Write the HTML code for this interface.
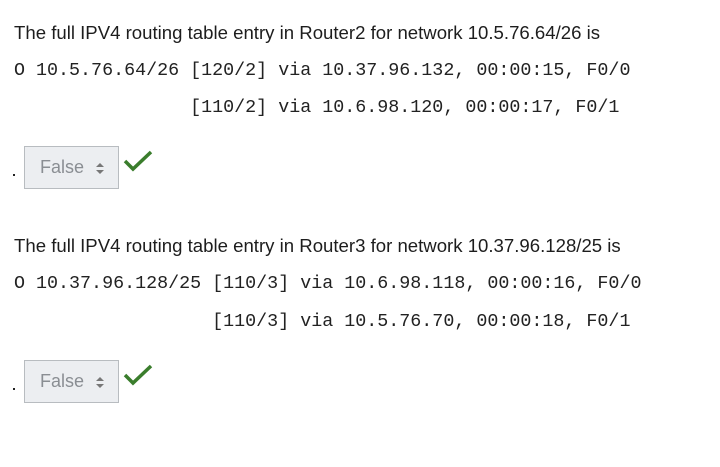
<!DOCTYPE html>
<html><head><style>
body{margin:0;background:#fff;width:720px;height:467px;position:relative;font-family:"Liberation Sans",sans-serif;color:#1d1d1d}
.t{position:absolute;left:14px;font-size:18.6px;line-height:22px}
.m{position:absolute;left:14px;font-family:"Liberation Mono",monospace;font-size:18.35px;line-height:20px;white-space:pre;color:#222}
.sel{position:absolute;left:24px;width:93px;height:41px;border:1px solid #b8bcc0;background:#eceef1;color:#8a8e93;font-size:18px;line-height:41px;box-sizing:content-box}
.sel span{position:absolute;left:15px}
.arr{position:absolute;left:70px;top:15px}
.dot{position:absolute;left:13px;width:2px;height:2px;background:#222}
.ck{position:absolute;left:122px}
</style></head><body>
<div class="t" style="top:22px">The full IPV4 routing table entry in Router2 for network 10.5.76.64/26 is</div>
<div class="m" style="top:61px">O 10.5.76.64/26 [120/2] via 10.37.96.132, 00:00:15, F0/0</div>
<div class="m" style="top:98px">                [110/2] via 10.6.98.120, 00:00:17, F0/1</div>
<div class="dot" style="top:174px"></div>
<div class="sel" style="top:146px"><span>False</span><svg class="arr" width="10" height="13" viewBox="0 0 10 13"><path d="M1 5L5 1L9 5Z M1 8L5 12L9 8Z" fill="#777"/></svg></div>
<svg class="ck" style="top:148px" width="32" height="26" viewBox="0 0 32 26"><path d="M3 13L11 21L29 4" fill="none" stroke="#3a7d2c" stroke-width="3.5"/></svg>
<div class="t" style="top:235px">The full IPV4 routing table entry in Router3 for network 10.37.96.128/25 is</div>
<div class="m" style="top:274px">O 10.37.96.128/25 [110/3] via 10.6.98.118, 00:00:16, F0/0</div>
<div class="m" style="top:312px">                  [110/3] via 10.5.76.70, 00:00:18, F0/1</div>
<div class="dot" style="top:388px"></div>
<div class="sel" style="top:360px"><span>False</span><svg class="arr" width="10" height="13" viewBox="0 0 10 13"><path d="M1 5L5 1L9 5Z M1 8L5 12L9 8Z" fill="#777"/></svg></div>
<svg class="ck" style="top:362px" width="32" height="26" viewBox="0 0 32 26"><path d="M3 13L11 21L29 4" fill="none" stroke="#3a7d2c" stroke-width="3.5"/></svg>
</body></html>
